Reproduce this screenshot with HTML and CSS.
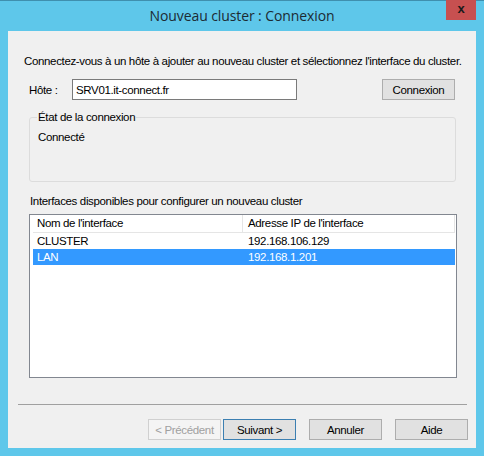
FILE: index.html
```html
<!DOCTYPE html>
<html lang="fr">
  <head>
    <meta charset="UTF-8" />
    <title>Nouveau cluster : Connexion</title>
    <link rel="stylesheet" href="styles.css">
  </head>
  <body>
    <div class="window">
      <!-- Title bar -->
      <div class="titlebar">
        <span></span>
        <span class="title">Nouveau cluster : Connexion</span>
        <button class="close">x</button>
      </div>

      <!-- Dialog body -->
      <div class="panel">
        <p class="intro">Connectez-vous à un hôte à ajouter au nouveau cluster et sélectionnez l'interface du cluster.</p>

        <div class="host-row">
          <label class="host-label" for="host">Hôte :</label>
          <input class="host-input" id="host" type="text" value="SRV01.it-connect.fr" />
          <button class="btn btn-connect">Connexion</button>
        </div>

        <fieldset class="status">
          <legend>État de la connexion</legend>
          <div class="status-text">Connecté</div>
        </fieldset>

        <div class="list-label">Interfaces disponibles pour configurer un nouveau cluster</div>

        <div class="list">
          <div class="list-head">
            <div class="cell">Nom de l'interface</div>
            <div class="cell">Adresse IP de l'interface</div>
          </div>
          <div class="list-row">
            <div class="cell">CLUSTER</div>
            <div class="cell">192.168.106.129</div>
          </div>
          <div class="list-row selected">
            <div class="cell">LAN</div>
            <div class="cell">192.168.1.201</div>
          </div>
        </div>

        <hr class="separator" />

        <div class="buttons">
          <button class="btn" disabled>&lt; Précédent</button>
          <button class="btn btn-default">Suivant &gt;</button>
          <button class="btn btn-gap">Annuler</button>
          <button class="btn btn-gap">Aide</button>
        </div>
      </div>
    </div>
  </body>
</html>
```

FILE: styles.css
```css
body {
  margin: 0;
  padding: 0;
  font-family: "Liberation Sans", Arial, sans-serif;
  font-size: 11.5px;
  letter-spacing: -0.35px;
  color: #000;
}

.window {
  width: 484px;
  height: 456px;
  box-sizing: border-box;
  background: #5ec7ea;
  border-top: 1px solid #3f8fae;
  display: flex;
  flex-direction: column;
}

/* Title bar */
.titlebar {
  height: 30px;
  display: grid;
  grid-template-columns: 1fr auto 1fr;
  padding: 0 8px 0 8px;
}
.title {
  font-family: "Open Sans", sans-serif;
  font-size: 14px;
  letter-spacing: -0.1px;
  color: #1c2b33;
  line-height: 30px;
}
.close {
  justify-self: end;
  width: 30px;
  height: 20px;
  margin-top: -1px;
  border: none;
  background: #c75050;
  color: #1a1a1a;
  font-family: "Liberation Sans", sans-serif;
  font-weight: bold;
  font-size: 13px;
  letter-spacing: 0;
  line-height: 16px;
  padding: 0 0 2px;
}

/* Body */
.panel {
  flex: 1;
  margin: 0 8px 8px;
  background: #f0f0f0;
  padding: 23px 0 0 16px;
  display: flex;
  flex-direction: column;
}
.intro {
  margin: 0;
  line-height: 15px;
  white-space: nowrap;
}

.host-row {
  display: flex;
  align-items: center;
  margin-top: 10px;
  padding-left: 5px;
}
.host-label {
  width: 43px;
}
.host-input {
  width: 225px;
  height: 21px;
  box-sizing: border-box;
  border: 1px solid #7a7a7a;
  background: #fff;
  font: inherit;
  letter-spacing: inherit;
  padding: 0 3px;
  margin: 0;
}
.btn {
  height: 21px;
  width: 73px;
  box-sizing: border-box;
  border: 1px solid #adadad;
  background: #e1e1e1;
  font: inherit;
  letter-spacing: inherit;
  color: #000;
  padding: 0;
  margin: 0;
}
.btn-connect {
  margin-left: 85px;
}
.btn:disabled {
  background: #f4f4f4;
  border-color: #d0d0d0;
  color: #a0a0a0;
}
.btn-default {
  border-color: #3c7fb1;
  margin-left: 2px;
}
.btn-gap {
  margin-left: 13px;
}

.status {
  margin: 10px 0 0 5px;
  width: 427px;
  height: 72px;
  box-sizing: border-box;
  border: 1px solid #dcdcdc;
  border-radius: 3px;
  padding: 0 8px;
}
.status legend {
  padding: 0 1px;
  margin-left: -1px;
  line-height: 14px;
}
.status-text {
  margin-top: 7px;
}

.list-label {
  margin: 12px 0 0 6px;
  line-height: 15px;
}

.list {
  margin: 5px 0 0 5px;
  width: 428px;
  height: 164px;
  box-sizing: border-box;
  border: 1px solid #828790;
  background: #fff;
  padding: 0 1px 0 3px;
}
.list-head,
.list-row {
  display: grid;
  grid-template-columns: 210px 1fr;
}
.list-head {
  height: 17px;
  border-bottom: 1px solid #e5e5e5;
}
.list-head .cell {
  border-right: 1px solid #e5e5e5;
  line-height: 17px;
  padding-left: 4px;
}
.list-row .cell {
  line-height: 16px;
  padding-left: 4px;
}
.list-row .cell + .cell,
.list-head .cell + .cell {
  padding-left: 5px;
}
.list-row.selected {
  background: #3399ff;
  color: #fff;
}

.separator {
  margin: 26px 0 0 -6px;
  width: 449px;
  border: none;
  border-top: 1px solid #a0a0a0;
  height: 0;
}

.buttons {
  display: flex;
  margin: 14px 0 0 124px;
}
```
